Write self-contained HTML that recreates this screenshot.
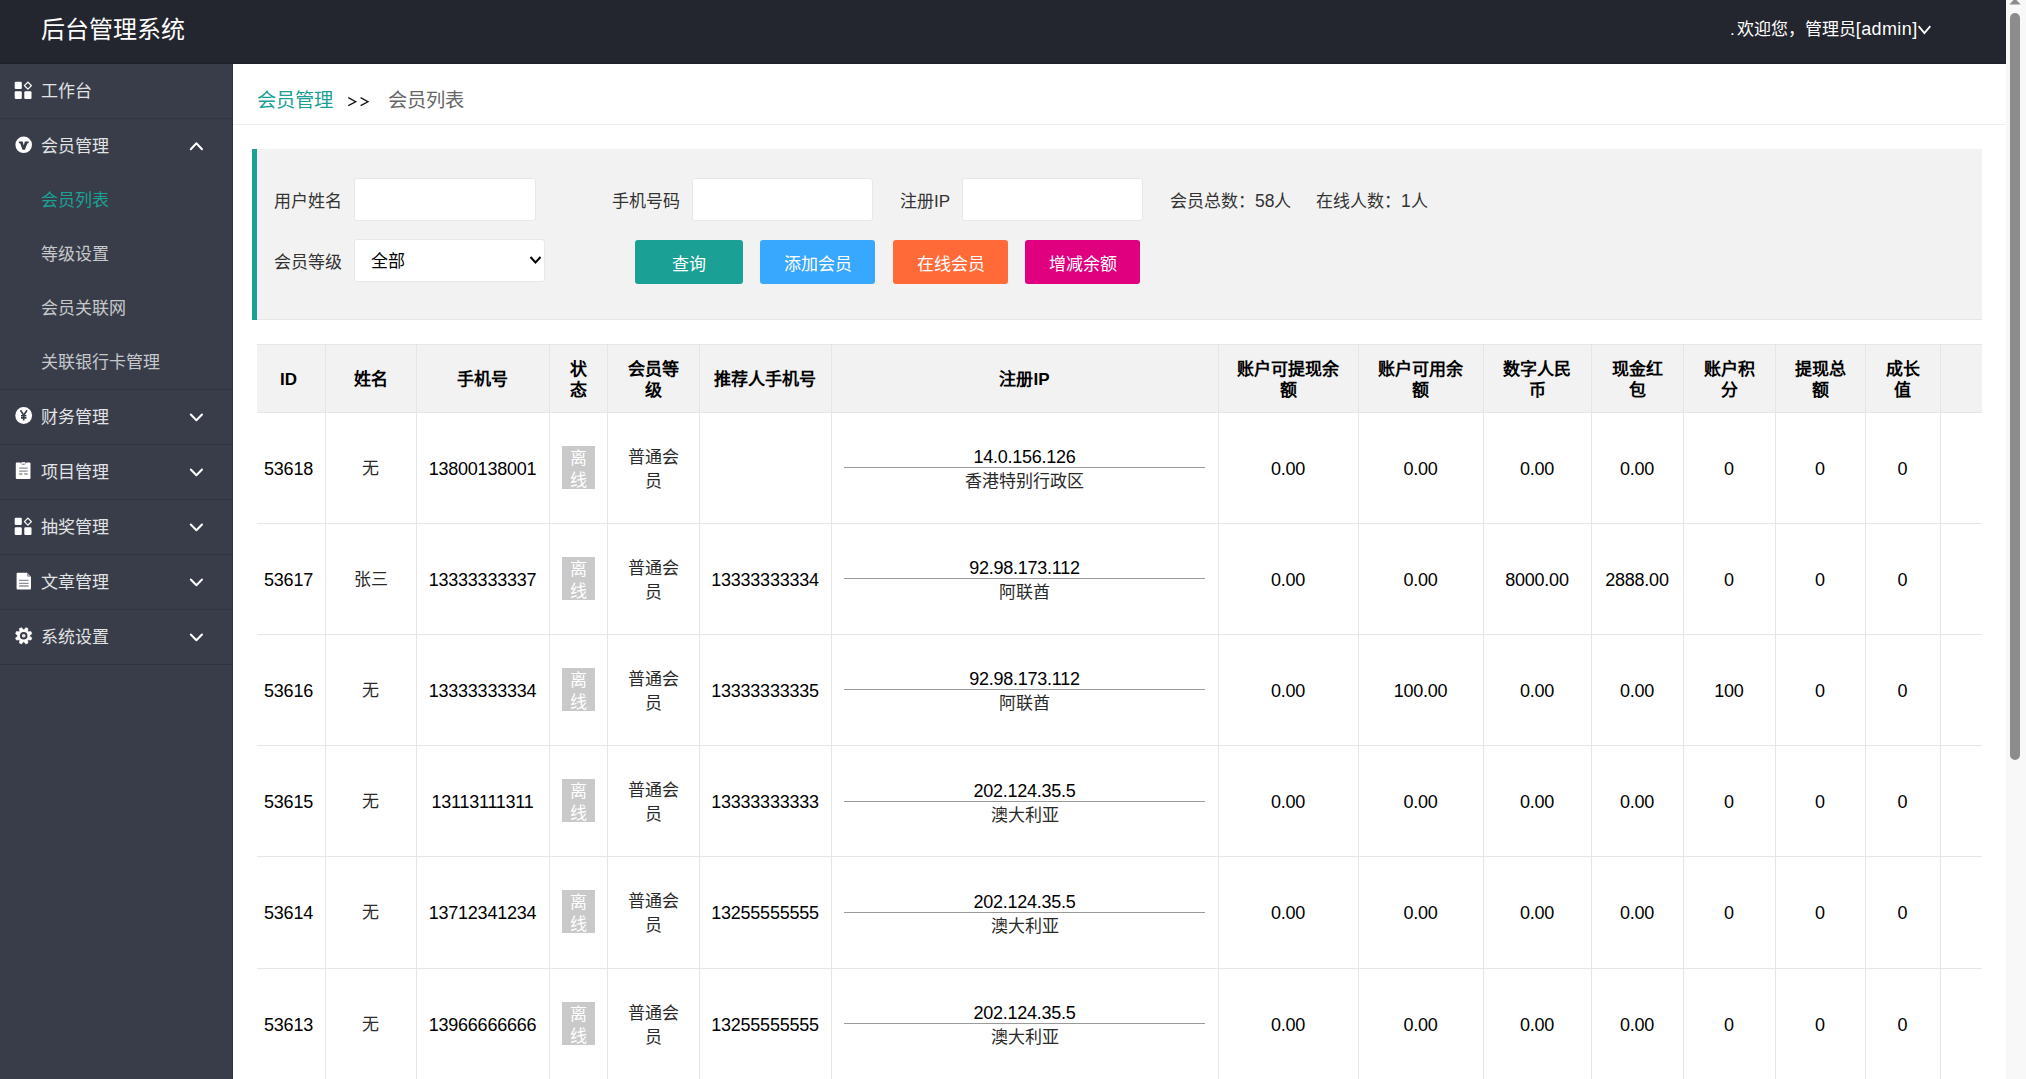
<!DOCTYPE html><html lang="zh-CN"><head><meta charset="utf-8"><title>后台管理系统</title><style>
*{box-sizing:border-box;margin:0;padding:0}
html,body{width:2026px;height:1079px;overflow:hidden;background:#fff}
body{font-family:"Liberation Sans", sans-serif;position:relative;color:#000}
.a{position:absolute}
.t{position:absolute;white-space:nowrap}
.n{font-size:18px;letter-spacing:-0.25px}
.c{position:absolute;display:flex;align-items:center;justify-content:center;text-align:center;white-space:nowrap}
</style></head><body>
<div class="a" style="left:0;top:0;width:2006px;height:64px;background:#23262e"></div>
<div class="a" style="left:0;top:62px;width:2006px;height:2px;background:#202229"></div>
<div class="t" style="left:41px;top:13px;font-size:24px;line-height:34px;color:#fff">后台管理系统</div>
<div class="t" style="left:1730px;top:15px;font-size:17px;line-height:28px;color:#fff">.<span style="margin-left:2px">欢迎您，管理员</span><span style="font-size:18px;letter-spacing:0.4px">[admin]</span></div>
<svg class="a" style="left:1916px;top:24px" width="16" height="12" viewBox="0 0 16 12"><path d="M2.6 2.1 L8.4 9.1 L14.3 2.1" stroke="#fff" stroke-width="1.8" fill="none"/></svg>
<div class="a" style="left:2006px;top:0;width:20px;height:1079px;background:#f8f8f8"></div>
<div class="a" style="left:2010px;top:13px;width:10px;height:747px;background:#8c8c8c;border-radius:5px"></div>
<svg class="a" style="left:2009px;top:0" width="12" height="5" viewBox="0 0 12 5"><path d="M0.3 4.6 L11.7 4.6 L6 -1.6 Z" fill="#8c8c8c"/></svg>
<div class="a" style="left:0;top:64px;width:233px;height:1015px;background:#393d49"></div>
<div class="a" style="left:232px;top:64px;width:1px;height:1015px;background:#2f333d"></div>
<div class="a" style="left:0;top:118px;width:232px;height:1px;background:#30343e"></div>
<div class="a" style="left:0;top:389px;width:232px;height:1px;background:#30343e"></div>
<div class="a" style="left:0;top:444px;width:232px;height:1px;background:#30343e"></div>
<div class="a" style="left:0;top:499px;width:232px;height:1px;background:#30343e"></div>
<div class="a" style="left:0;top:554px;width:232px;height:1px;background:#30343e"></div>
<div class="a" style="left:0;top:609px;width:232px;height:1px;background:#30343e"></div>
<div class="a" style="left:0;top:664px;width:232px;height:1px;background:#30343e"></div>
<svg class="a" style="left:13px;top:80px" width="22" height="22" viewBox="0 0 22 22"><rect x="1.7" y="1.7" width="7.1" height="7.4" rx="1.1" fill="#fff"/><path d="M14.9 2.1 L18.4 5.6 L14.9 9.1 L11.4 5.6 Z" fill="none" stroke="#fff" stroke-width="1.3" stroke-linejoin="round"/><rect x="1.7" y="11.3" width="7.1" height="7.7" rx="1.1" fill="#fff"/><rect x="11.3" y="11.3" width="7.2" height="7.7" rx="1.1" fill="#fff"/></svg>
<div class="t" style="left:41px;top:78px;font-size:17px;line-height:28px;color:#e2e3e5">工作台</div>
<svg class="a" style="left:13px;top:135px" width="22" height="22" viewBox="0 0 22 22"><circle cx="10.7" cy="9.8" r="8.3" fill="#fff"/><path d="M5.8 6.4 L15.8 6.4 L15.6 8.0 L14.3 8.4 L11.9 14.7 L9.5 14.7 L7.2 8.4 L5.9 8.0 Z" fill="#393d49"/><path d="M9.5 6.0 L12.0 6.0 L10.75 10.6 Z" fill="#fff"/></svg>
<div class="t" style="left:41px;top:133px;font-size:17px;line-height:28px;color:#e2e3e5">会员管理</div>
<svg class="a" style="left:188px;top:140px" width="16" height="12" viewBox="0 0 16 12"><path d="M2.8 9.2 L8.4 3.3 L14 9.2" stroke="#fff" stroke-width="2" stroke-linecap="round" stroke-linejoin="round" fill="none"/></svg>
<svg class="a" style="left:13px;top:406px" width="22" height="22" viewBox="0 0 22 22"><circle cx="10.7" cy="9.5" r="8.4" fill="#fff"/><path d="M7.5 4.3 L10.7 9.3 L14.0 4.3 M10.7 9.3 V14.6 M8 9.8 H13.4 M8 11.9 H13.4" fill="none" stroke="#393d49" stroke-width="1.6"/></svg>
<div class="t" style="left:41px;top:404px;font-size:17px;line-height:28px;color:#e2e3e5">财务管理</div>
<svg class="a" style="left:188px;top:411px" width="16" height="12" viewBox="0 0 16 12"><path d="M2.8 3.5 L8.4 9.3 L14 3.5" stroke="#fff" stroke-width="2" stroke-linecap="round" stroke-linejoin="round" fill="none"/></svg>
<svg class="a" style="left:13px;top:461px" width="22" height="22" viewBox="0 0 22 22"><path d="M3.8 1.6 H7.2 Q8.2 3.9 10.4 3.9 Q12.6 3.9 13.6 1.6 H16.5 Q17.5 1.6 17.5 2.6 V17 Q17.5 18 16.5 18 H3.8 Q2.8 18 2.8 17 V2.6 Q2.8 1.6 3.8 1.6 Z" fill="#fff"/><rect x="8" y="0.9" width="4.8" height="2.6" rx="1.2" fill="#ddd"/><path d="M6.1 7.1 H14.7 M6.1 10.2 H14.7 M6.1 13 H9.5 M11.2 13 H14.7" stroke="#8d9097" stroke-width="1.3"/></svg>
<div class="t" style="left:41px;top:459px;font-size:17px;line-height:28px;color:#e2e3e5">项目管理</div>
<svg class="a" style="left:188px;top:466px" width="16" height="12" viewBox="0 0 16 12"><path d="M2.8 3.5 L8.4 9.3 L14 3.5" stroke="#fff" stroke-width="2" stroke-linecap="round" stroke-linejoin="round" fill="none"/></svg>
<svg class="a" style="left:13px;top:516px" width="22" height="22" viewBox="0 0 22 22"><rect x="1.7" y="1.7" width="7.1" height="7.4" rx="1.1" fill="#fff"/><path d="M14.9 2.1 L18.4 5.6 L14.9 9.1 L11.4 5.6 Z" fill="none" stroke="#fff" stroke-width="1.3" stroke-linejoin="round"/><rect x="1.7" y="11.3" width="7.1" height="7.7" rx="1.1" fill="#fff"/><rect x="11.3" y="11.3" width="7.2" height="7.7" rx="1.1" fill="#fff"/></svg>
<div class="t" style="left:41px;top:514px;font-size:17px;line-height:28px;color:#e2e3e5">抽奖管理</div>
<svg class="a" style="left:188px;top:521px" width="16" height="12" viewBox="0 0 16 12"><path d="M2.8 3.5 L8.4 9.3 L14 3.5" stroke="#fff" stroke-width="2" stroke-linecap="round" stroke-linejoin="round" fill="none"/></svg>
<svg class="a" style="left:13px;top:571px" width="22" height="22" viewBox="0 0 22 22"><path d="M4.6 1.8 H14 L18 5.8 V17.5 Q18 18.5 17 18.5 H4.6 Q3.6 18.5 3.6 17.5 V2.8 Q3.6 1.8 4.6 1.8 Z" fill="#fff"/><path d="M14 1.8 L18 5.8 L15.2 5.8 Q14 5.8 14 4.6 Z" fill="#9a9ca3"/><path d="M6.1 9.3 H15.6 M6.1 12.4 H15.6 M6.1 15 H15.6" stroke="#8d9097" stroke-width="1.3"/></svg>
<div class="t" style="left:41px;top:569px;font-size:17px;line-height:28px;color:#e2e3e5">文章管理</div>
<svg class="a" style="left:188px;top:576px" width="16" height="12" viewBox="0 0 16 12"><path d="M2.8 3.5 L8.4 9.3 L14 3.5" stroke="#fff" stroke-width="2" stroke-linecap="round" stroke-linejoin="round" fill="none"/></svg>
<svg class="a" style="left:13px;top:626px" width="22" height="22" viewBox="0 0 22 22"><path d="M11.07 3.81 L12.80 1.67 L14.96 2.56 L14.68 5.31 L15.19 5.82 L17.94 5.54 L18.83 7.70 L16.69 9.43 L16.69 10.17 L18.83 11.90 L17.94 14.06 L15.19 13.78 L14.68 14.29 L14.96 17.04 L12.80 17.93 L11.07 15.79 L10.33 15.79 L8.60 17.93 L6.44 17.04 L6.72 14.29 L6.21 13.78 L3.46 14.06 L2.57 11.90 L4.71 10.17 L4.71 9.43 L2.57 7.70 L3.46 5.54 L6.21 5.82 L6.72 5.31 L6.44 2.56 L8.60 1.67 L10.33 3.81 Z" fill="#fff" stroke="#fff" stroke-width="0.6" stroke-linejoin="round"/><circle cx="10.7" cy="9.8" r="2.8" fill="none" stroke="#393d49" stroke-width="2"/><circle cx="10.7" cy="9.8" r="1.0" fill="#cfd0d3"/></svg>
<div class="t" style="left:41px;top:624px;font-size:17px;line-height:28px;color:#e2e3e5">系统设置</div>
<svg class="a" style="left:188px;top:631px" width="16" height="12" viewBox="0 0 16 12"><path d="M2.8 3.5 L8.4 9.3 L14 3.5" stroke="#fff" stroke-width="2" stroke-linecap="round" stroke-linejoin="round" fill="none"/></svg>
<div class="t" style="left:41px;top:187px;font-size:17px;line-height:28px;color:#1aa094">会员列表</div>
<div class="t" style="left:41px;top:241px;font-size:17px;line-height:28px;color:#c6c8cc">等级设置</div>
<div class="t" style="left:41px;top:295px;font-size:17px;line-height:28px;color:#c6c8cc">会员关联网</div>
<div class="t" style="left:41px;top:349px;font-size:17px;line-height:28px;color:#c6c8cc">关联银行卡管理</div>
<div class="t" style="left:257px;top:86px;font-size:19.3px;line-height:30px;color:#1aa094">会员管理</div>
<svg class="a" style="left:346px;top:95px" width="25" height="13" viewBox="0 0 25 13"><path d="M2.3 2.6 L9.7 6.8 L2.3 10.6 M14.6 2.6 L22 6.8 L14.6 10.6" stroke="#111" stroke-width="1.3" fill="none"/></svg>
<div class="t" style="left:388px;top:86px;font-size:19.3px;line-height:30px;color:#666">会员列表</div>
<div class="a" style="left:233px;top:124px;width:1773px;height:1px;background:#eee"></div>
<div class="a" style="left:252px;top:149px;width:1730px;height:171px;background:#f2f2f2;border-bottom:1px solid #e6e6e6"></div>
<div class="a" style="left:252px;top:149px;width:5px;height:171px;background:#1aa094"></div>
<div class="t" style="left:274px;top:188px;font-size:17px;line-height:28px;color:#333">用户姓名</div>
<div class="a" style="left:354px;top:178px;width:182px;height:43px;background:#fff;border:1px solid #e8e8e8;border-radius:3px"></div>
<div class="t" style="left:612px;top:188px;font-size:17px;line-height:28px;color:#333">手机号码</div>
<div class="a" style="left:692px;top:178px;width:181px;height:43px;background:#fff;border:1px solid #e8e8e8;border-radius:3px"></div>
<div class="t" style="left:900px;top:188px;font-size:17px;line-height:28px;color:#333">注册IP</div>
<div class="a" style="left:962px;top:178px;width:181px;height:43px;background:#fff;border:1px solid #e8e8e8;border-radius:3px"></div>
<div class="t" style="left:1170px;top:187px;font-size:17px;line-height:28px;color:#333">会员总数：<span style="font-size:17.5px">58</span>人</div>
<div class="t" style="left:1316px;top:187px;font-size:17px;line-height:28px;color:#333">在线人数：<span style="font-size:17.5px">1</span>人</div>
<div class="t" style="left:274px;top:249px;font-size:17px;line-height:28px;color:#333">会员等级</div>
<div class="a" style="left:354px;top:239px;width:191px;height:43px;background:#fff;border:1px solid #e8e8e8;border-radius:3px"></div>
<div class="t" style="left:371px;top:248px;font-size:17px;line-height:28px;color:#000">全部</div>
<svg class="a" style="left:529px;top:255px" width="13" height="10" viewBox="0 0 13 10"><path d="M1.5 2 L6.5 7.5 L11.5 2" stroke="#000" stroke-width="2" fill="none"/></svg>
<div class="c" style="left:635px;top:240px;width:108px;height:44px;background:#1aa094;border-radius:3px;color:#fff;font-size:17px">查询</div>
<div class="c" style="left:760px;top:240px;width:115px;height:44px;background:#38a8ff;border-radius:3px;color:#fff;font-size:17px">添加会员</div>
<div class="c" style="left:893px;top:240px;width:115px;height:44px;background:#ff6a38;border-radius:3px;color:#fff;font-size:17px">在线会员</div>
<div class="c" style="left:1025px;top:240px;width:115px;height:44px;background:#e0007f;border-radius:3px;color:#fff;font-size:17px">增减余额</div>
<div class="a" style="left:257px;top:344px;width:1725px;height:68px;background:#f2f2f2"></div>
<div class="a" style="left:257px;top:344px;width:1725px;height:1px;background:#e6e6e6"></div>
<div class="a" style="left:257px;top:412px;width:1725px;height:1px;background:#e6e6e6"></div>
<div class="a" style="left:257px;top:523px;width:1725px;height:1px;background:#e6e6e6"></div>
<div class="a" style="left:257px;top:634px;width:1725px;height:1px;background:#e6e6e6"></div>
<div class="a" style="left:257px;top:745px;width:1725px;height:1px;background:#e6e6e6"></div>
<div class="a" style="left:257px;top:856px;width:1725px;height:1px;background:#e6e6e6"></div>
<div class="a" style="left:257px;top:968px;width:1725px;height:1px;background:#e6e6e6"></div>
<div class="a" style="left:325px;top:344px;width:1px;height:735px;background:#e6e6e6"></div>
<div class="a" style="left:416px;top:344px;width:1px;height:735px;background:#e6e6e6"></div>
<div class="a" style="left:549px;top:344px;width:1px;height:735px;background:#e6e6e6"></div>
<div class="a" style="left:607px;top:344px;width:1px;height:735px;background:#e6e6e6"></div>
<div class="a" style="left:699px;top:344px;width:1px;height:735px;background:#e6e6e6"></div>
<div class="a" style="left:831px;top:344px;width:1px;height:735px;background:#e6e6e6"></div>
<div class="a" style="left:1218px;top:344px;width:1px;height:735px;background:#e6e6e6"></div>
<div class="a" style="left:1358px;top:344px;width:1px;height:735px;background:#e6e6e6"></div>
<div class="a" style="left:1483px;top:344px;width:1px;height:735px;background:#e6e6e6"></div>
<div class="a" style="left:1591px;top:344px;width:1px;height:735px;background:#e6e6e6"></div>
<div class="a" style="left:1683px;top:344px;width:1px;height:735px;background:#e6e6e6"></div>
<div class="a" style="left:1775px;top:344px;width:1px;height:735px;background:#e6e6e6"></div>
<div class="a" style="left:1865px;top:344px;width:1px;height:735px;background:#e6e6e6"></div>
<div class="a" style="left:1940px;top:344px;width:1px;height:735px;background:#e6e6e6"></div>
<div class="c" style="left:257px;top:345px;width:68px;height:67px;font-size:17px;line-height:21.5px;font-weight:bold;color:#000;padding-top:3px;padding-right:5px">ID</div>
<div class="c" style="left:325px;top:345px;width:91px;height:67px;font-size:17px;line-height:21.5px;font-weight:bold;color:#000;padding-top:3px;">姓名</div>
<div class="c" style="left:416px;top:345px;width:133px;height:67px;font-size:17px;line-height:21.5px;font-weight:bold;color:#000;padding-top:3px;">手机号</div>
<div class="c" style="left:549px;top:345px;width:58px;height:67px;font-size:17px;line-height:21.5px;font-weight:bold;color:#000;padding-top:3px;">状<br>态</div>
<div class="c" style="left:607px;top:345px;width:92px;height:67px;font-size:17px;line-height:21.5px;font-weight:bold;color:#000;padding-top:3px;">会员等<br>级</div>
<div class="c" style="left:699px;top:345px;width:132px;height:67px;font-size:17px;line-height:21.5px;font-weight:bold;color:#000;padding-top:3px;">推荐人手机号</div>
<div class="c" style="left:831px;top:345px;width:387px;height:67px;font-size:17px;line-height:21.5px;font-weight:bold;color:#000;padding-top:3px;">注册IP</div>
<div class="c" style="left:1218px;top:345px;width:140px;height:67px;font-size:17px;line-height:21.5px;font-weight:bold;color:#000;padding-top:3px;">账户可提现余<br>额</div>
<div class="c" style="left:1358px;top:345px;width:125px;height:67px;font-size:17px;line-height:21.5px;font-weight:bold;color:#000;padding-top:3px;">账户可用余<br>额</div>
<div class="c" style="left:1483px;top:345px;width:108px;height:67px;font-size:17px;line-height:21.5px;font-weight:bold;color:#000;padding-top:3px;">数字人民<br>币</div>
<div class="c" style="left:1591px;top:345px;width:92px;height:67px;font-size:17px;line-height:21.5px;font-weight:bold;color:#000;padding-top:3px;">现金红<br>包</div>
<div class="c" style="left:1683px;top:345px;width:92px;height:67px;font-size:17px;line-height:21.5px;font-weight:bold;color:#000;padding-top:3px;">账户积<br>分</div>
<div class="c" style="left:1775px;top:345px;width:90px;height:67px;font-size:17px;line-height:21.5px;font-weight:bold;color:#000;padding-top:3px;">提现总<br>额</div>
<div class="c" style="left:1865px;top:345px;width:75px;height:67px;font-size:17px;line-height:21.5px;font-weight:bold;color:#000;padding-top:3px;">成长<br>值</div>
<div class="c" style="left:1940px;top:345px;width:42px;height:67px;font-size:17px;line-height:21.5px;font-weight:bold;color:#000;padding-top:3px;"></div>
<div class="c" style="left:257px;top:413px;width:68px;height:111px;font-size:17px;line-height:22.5px;padding-top:2px;padding-right:5px"><span class="n">53618</span></div>
<div class="c" style="left:325px;top:413px;width:91px;height:111px;font-size:17px;line-height:22.5px;padding-top:2px;color:#2a2a2a">无</div>
<div class="c" style="left:416px;top:413px;width:133px;height:111px;font-size:17px;line-height:22.5px;padding-top:2px;"><span class="n">13800138001</span></div>
<div class="c" style="left:562px;top:446px;width:33px;height:43px;background:#c9c9c9;color:#fff;font-size:17px;line-height:22px;padding-top:4px">离<br>线</div>
<div class="c" style="left:607px;top:413px;width:92px;height:111px;font-size:17px;line-height:22.5px;padding-top:2px;line-height:23.5px;padding-top:2.5px;color:#2a2a2a">普通会<br>员</div>
<div class="c" style="left:699px;top:413px;width:132px;height:111px;font-size:17px;line-height:22.5px;padding-top:2px;"></div>
<div class="t" style="left:831px;top:445px;width:387px;text-align:center;font-size:18px;letter-spacing:-0.25px;line-height:24px">14.0.156.126</div>
<div class="a" style="left:844px;top:467px;width:361px;height:1px;background:#9a9a9a"></div>
<div class="t" style="left:831px;top:470px;width:387px;text-align:center;font-size:17px;line-height:24px;color:#2a2a2a">香港特别行政区</div>
<div class="c" style="left:1218px;top:413px;width:140px;height:111px;font-size:17px;line-height:22.5px;padding-top:2px;"><span class="n">0.00</span></div>
<div class="c" style="left:1358px;top:413px;width:125px;height:111px;font-size:17px;line-height:22.5px;padding-top:2px;"><span class="n">0.00</span></div>
<div class="c" style="left:1483px;top:413px;width:108px;height:111px;font-size:17px;line-height:22.5px;padding-top:2px;"><span class="n">0.00</span></div>
<div class="c" style="left:1591px;top:413px;width:92px;height:111px;font-size:17px;line-height:22.5px;padding-top:2px;"><span class="n">0.00</span></div>
<div class="c" style="left:1683px;top:413px;width:92px;height:111px;font-size:17px;line-height:22.5px;padding-top:2px;"><span class="n">0</span></div>
<div class="c" style="left:1775px;top:413px;width:90px;height:111px;font-size:17px;line-height:22.5px;padding-top:2px;"><span class="n">0</span></div>
<div class="c" style="left:1865px;top:413px;width:75px;height:111px;font-size:17px;line-height:22.5px;padding-top:2px;"><span class="n">0</span></div>
<div class="c" style="left:257px;top:524px;width:68px;height:111px;font-size:17px;line-height:22.5px;padding-top:2px;padding-right:5px"><span class="n">53617</span></div>
<div class="c" style="left:325px;top:524px;width:91px;height:111px;font-size:17px;line-height:22.5px;padding-top:2px;color:#2a2a2a">张三</div>
<div class="c" style="left:416px;top:524px;width:133px;height:111px;font-size:17px;line-height:22.5px;padding-top:2px;"><span class="n">13333333337</span></div>
<div class="c" style="left:562px;top:557px;width:33px;height:43px;background:#c9c9c9;color:#fff;font-size:17px;line-height:22px;padding-top:4px">离<br>线</div>
<div class="c" style="left:607px;top:524px;width:92px;height:111px;font-size:17px;line-height:22.5px;padding-top:2px;line-height:23.5px;padding-top:2.5px;color:#2a2a2a">普通会<br>员</div>
<div class="c" style="left:699px;top:524px;width:132px;height:111px;font-size:17px;line-height:22.5px;padding-top:2px;"><span class="n">13333333334</span></div>
<div class="t" style="left:831px;top:556px;width:387px;text-align:center;font-size:18px;letter-spacing:-0.25px;line-height:24px">92.98.173.112</div>
<div class="a" style="left:844px;top:578px;width:361px;height:1px;background:#9a9a9a"></div>
<div class="t" style="left:831px;top:581px;width:387px;text-align:center;font-size:17px;line-height:24px;color:#2a2a2a">阿联酋</div>
<div class="c" style="left:1218px;top:524px;width:140px;height:111px;font-size:17px;line-height:22.5px;padding-top:2px;"><span class="n">0.00</span></div>
<div class="c" style="left:1358px;top:524px;width:125px;height:111px;font-size:17px;line-height:22.5px;padding-top:2px;"><span class="n">0.00</span></div>
<div class="c" style="left:1483px;top:524px;width:108px;height:111px;font-size:17px;line-height:22.5px;padding-top:2px;"><span class="n">8000.00</span></div>
<div class="c" style="left:1591px;top:524px;width:92px;height:111px;font-size:17px;line-height:22.5px;padding-top:2px;"><span class="n">2888.00</span></div>
<div class="c" style="left:1683px;top:524px;width:92px;height:111px;font-size:17px;line-height:22.5px;padding-top:2px;"><span class="n">0</span></div>
<div class="c" style="left:1775px;top:524px;width:90px;height:111px;font-size:17px;line-height:22.5px;padding-top:2px;"><span class="n">0</span></div>
<div class="c" style="left:1865px;top:524px;width:75px;height:111px;font-size:17px;line-height:22.5px;padding-top:2px;"><span class="n">0</span></div>
<div class="c" style="left:257px;top:635px;width:68px;height:111px;font-size:17px;line-height:22.5px;padding-top:2px;padding-right:5px"><span class="n">53616</span></div>
<div class="c" style="left:325px;top:635px;width:91px;height:111px;font-size:17px;line-height:22.5px;padding-top:2px;color:#2a2a2a">无</div>
<div class="c" style="left:416px;top:635px;width:133px;height:111px;font-size:17px;line-height:22.5px;padding-top:2px;"><span class="n">13333333334</span></div>
<div class="c" style="left:562px;top:668px;width:33px;height:43px;background:#c9c9c9;color:#fff;font-size:17px;line-height:22px;padding-top:4px">离<br>线</div>
<div class="c" style="left:607px;top:635px;width:92px;height:111px;font-size:17px;line-height:22.5px;padding-top:2px;line-height:23.5px;padding-top:2.5px;color:#2a2a2a">普通会<br>员</div>
<div class="c" style="left:699px;top:635px;width:132px;height:111px;font-size:17px;line-height:22.5px;padding-top:2px;"><span class="n">13333333335</span></div>
<div class="t" style="left:831px;top:667px;width:387px;text-align:center;font-size:18px;letter-spacing:-0.25px;line-height:24px">92.98.173.112</div>
<div class="a" style="left:844px;top:689px;width:361px;height:1px;background:#9a9a9a"></div>
<div class="t" style="left:831px;top:692px;width:387px;text-align:center;font-size:17px;line-height:24px;color:#2a2a2a">阿联酋</div>
<div class="c" style="left:1218px;top:635px;width:140px;height:111px;font-size:17px;line-height:22.5px;padding-top:2px;"><span class="n">0.00</span></div>
<div class="c" style="left:1358px;top:635px;width:125px;height:111px;font-size:17px;line-height:22.5px;padding-top:2px;"><span class="n">100.00</span></div>
<div class="c" style="left:1483px;top:635px;width:108px;height:111px;font-size:17px;line-height:22.5px;padding-top:2px;"><span class="n">0.00</span></div>
<div class="c" style="left:1591px;top:635px;width:92px;height:111px;font-size:17px;line-height:22.5px;padding-top:2px;"><span class="n">0.00</span></div>
<div class="c" style="left:1683px;top:635px;width:92px;height:111px;font-size:17px;line-height:22.5px;padding-top:2px;"><span class="n">100</span></div>
<div class="c" style="left:1775px;top:635px;width:90px;height:111px;font-size:17px;line-height:22.5px;padding-top:2px;"><span class="n">0</span></div>
<div class="c" style="left:1865px;top:635px;width:75px;height:111px;font-size:17px;line-height:22.5px;padding-top:2px;"><span class="n">0</span></div>
<div class="c" style="left:257px;top:746px;width:68px;height:111px;font-size:17px;line-height:22.5px;padding-top:2px;padding-right:5px"><span class="n">53615</span></div>
<div class="c" style="left:325px;top:746px;width:91px;height:111px;font-size:17px;line-height:22.5px;padding-top:2px;color:#2a2a2a">无</div>
<div class="c" style="left:416px;top:746px;width:133px;height:111px;font-size:17px;line-height:22.5px;padding-top:2px;"><span class="n">13113111311</span></div>
<div class="c" style="left:562px;top:779px;width:33px;height:43px;background:#c9c9c9;color:#fff;font-size:17px;line-height:22px;padding-top:4px">离<br>线</div>
<div class="c" style="left:607px;top:746px;width:92px;height:111px;font-size:17px;line-height:22.5px;padding-top:2px;line-height:23.5px;padding-top:2.5px;color:#2a2a2a">普通会<br>员</div>
<div class="c" style="left:699px;top:746px;width:132px;height:111px;font-size:17px;line-height:22.5px;padding-top:2px;"><span class="n">13333333333</span></div>
<div class="t" style="left:831px;top:779px;width:387px;text-align:center;font-size:18px;letter-spacing:-0.25px;line-height:24px">202.124.35.5</div>
<div class="a" style="left:844px;top:801px;width:361px;height:1px;background:#9a9a9a"></div>
<div class="t" style="left:831px;top:804px;width:387px;text-align:center;font-size:17px;line-height:24px;color:#2a2a2a">澳大利亚</div>
<div class="c" style="left:1218px;top:746px;width:140px;height:111px;font-size:17px;line-height:22.5px;padding-top:2px;"><span class="n">0.00</span></div>
<div class="c" style="left:1358px;top:746px;width:125px;height:111px;font-size:17px;line-height:22.5px;padding-top:2px;"><span class="n">0.00</span></div>
<div class="c" style="left:1483px;top:746px;width:108px;height:111px;font-size:17px;line-height:22.5px;padding-top:2px;"><span class="n">0.00</span></div>
<div class="c" style="left:1591px;top:746px;width:92px;height:111px;font-size:17px;line-height:22.5px;padding-top:2px;"><span class="n">0.00</span></div>
<div class="c" style="left:1683px;top:746px;width:92px;height:111px;font-size:17px;line-height:22.5px;padding-top:2px;"><span class="n">0</span></div>
<div class="c" style="left:1775px;top:746px;width:90px;height:111px;font-size:17px;line-height:22.5px;padding-top:2px;"><span class="n">0</span></div>
<div class="c" style="left:1865px;top:746px;width:75px;height:111px;font-size:17px;line-height:22.5px;padding-top:2px;"><span class="n">0</span></div>
<div class="c" style="left:257px;top:857px;width:68px;height:111px;font-size:17px;line-height:22.5px;padding-top:2px;padding-right:5px"><span class="n">53614</span></div>
<div class="c" style="left:325px;top:857px;width:91px;height:111px;font-size:17px;line-height:22.5px;padding-top:2px;color:#2a2a2a">无</div>
<div class="c" style="left:416px;top:857px;width:133px;height:111px;font-size:17px;line-height:22.5px;padding-top:2px;"><span class="n">13712341234</span></div>
<div class="c" style="left:562px;top:890px;width:33px;height:43px;background:#c9c9c9;color:#fff;font-size:17px;line-height:22px;padding-top:4px">离<br>线</div>
<div class="c" style="left:607px;top:857px;width:92px;height:111px;font-size:17px;line-height:22.5px;padding-top:2px;line-height:23.5px;padding-top:2.5px;color:#2a2a2a">普通会<br>员</div>
<div class="c" style="left:699px;top:857px;width:132px;height:111px;font-size:17px;line-height:22.5px;padding-top:2px;"><span class="n">13255555555</span></div>
<div class="t" style="left:831px;top:890px;width:387px;text-align:center;font-size:18px;letter-spacing:-0.25px;line-height:24px">202.124.35.5</div>
<div class="a" style="left:844px;top:912px;width:361px;height:1px;background:#9a9a9a"></div>
<div class="t" style="left:831px;top:915px;width:387px;text-align:center;font-size:17px;line-height:24px;color:#2a2a2a">澳大利亚</div>
<div class="c" style="left:1218px;top:857px;width:140px;height:111px;font-size:17px;line-height:22.5px;padding-top:2px;"><span class="n">0.00</span></div>
<div class="c" style="left:1358px;top:857px;width:125px;height:111px;font-size:17px;line-height:22.5px;padding-top:2px;"><span class="n">0.00</span></div>
<div class="c" style="left:1483px;top:857px;width:108px;height:111px;font-size:17px;line-height:22.5px;padding-top:2px;"><span class="n">0.00</span></div>
<div class="c" style="left:1591px;top:857px;width:92px;height:111px;font-size:17px;line-height:22.5px;padding-top:2px;"><span class="n">0.00</span></div>
<div class="c" style="left:1683px;top:857px;width:92px;height:111px;font-size:17px;line-height:22.5px;padding-top:2px;"><span class="n">0</span></div>
<div class="c" style="left:1775px;top:857px;width:90px;height:111px;font-size:17px;line-height:22.5px;padding-top:2px;"><span class="n">0</span></div>
<div class="c" style="left:1865px;top:857px;width:75px;height:111px;font-size:17px;line-height:22.5px;padding-top:2px;"><span class="n">0</span></div>
<div class="c" style="left:257px;top:969px;width:68px;height:111px;font-size:17px;line-height:22.5px;padding-top:2px;padding-right:5px"><span class="n">53613</span></div>
<div class="c" style="left:325px;top:969px;width:91px;height:111px;font-size:17px;line-height:22.5px;padding-top:2px;color:#2a2a2a">无</div>
<div class="c" style="left:416px;top:969px;width:133px;height:111px;font-size:17px;line-height:22.5px;padding-top:2px;"><span class="n">13966666666</span></div>
<div class="c" style="left:562px;top:1002px;width:33px;height:43px;background:#c9c9c9;color:#fff;font-size:17px;line-height:22px;padding-top:4px">离<br>线</div>
<div class="c" style="left:607px;top:969px;width:92px;height:111px;font-size:17px;line-height:22.5px;padding-top:2px;line-height:23.5px;padding-top:2.5px;color:#2a2a2a">普通会<br>员</div>
<div class="c" style="left:699px;top:969px;width:132px;height:111px;font-size:17px;line-height:22.5px;padding-top:2px;"><span class="n">13255555555</span></div>
<div class="t" style="left:831px;top:1001px;width:387px;text-align:center;font-size:18px;letter-spacing:-0.25px;line-height:24px">202.124.35.5</div>
<div class="a" style="left:844px;top:1023px;width:361px;height:1px;background:#9a9a9a"></div>
<div class="t" style="left:831px;top:1026px;width:387px;text-align:center;font-size:17px;line-height:24px;color:#2a2a2a">澳大利亚</div>
<div class="c" style="left:1218px;top:969px;width:140px;height:111px;font-size:17px;line-height:22.5px;padding-top:2px;"><span class="n">0.00</span></div>
<div class="c" style="left:1358px;top:969px;width:125px;height:111px;font-size:17px;line-height:22.5px;padding-top:2px;"><span class="n">0.00</span></div>
<div class="c" style="left:1483px;top:969px;width:108px;height:111px;font-size:17px;line-height:22.5px;padding-top:2px;"><span class="n">0.00</span></div>
<div class="c" style="left:1591px;top:969px;width:92px;height:111px;font-size:17px;line-height:22.5px;padding-top:2px;"><span class="n">0.00</span></div>
<div class="c" style="left:1683px;top:969px;width:92px;height:111px;font-size:17px;line-height:22.5px;padding-top:2px;"><span class="n">0</span></div>
<div class="c" style="left:1775px;top:969px;width:90px;height:111px;font-size:17px;line-height:22.5px;padding-top:2px;"><span class="n">0</span></div>
<div class="c" style="left:1865px;top:969px;width:75px;height:111px;font-size:17px;line-height:22.5px;padding-top:2px;"><span class="n">0</span></div>
</body></html>
